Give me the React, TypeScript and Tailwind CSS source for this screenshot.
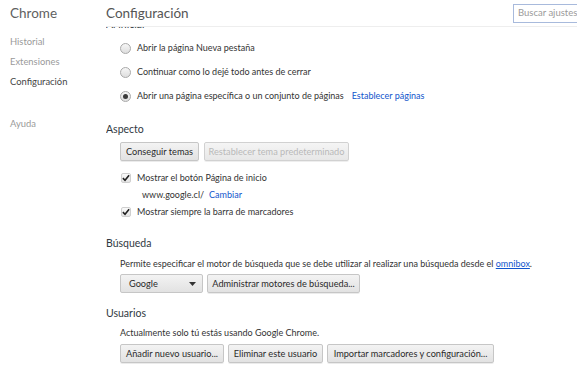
import React from "react";

const font = { fontFamily: 'Lato, "Open Sans", sans-serif' };

function Radio({ checked }: { checked?: boolean }) {
  return (
    <span className="flex h-[11px] w-[11px] shrink-0 items-center justify-center rounded-full border border-[#a9a9a9] bg-gradient-to-b from-[#f6f6f6] to-[#dedede]">
      {checked && <span className="h-[5px] w-[5px] rounded-full bg-[#3a3a3a]" />}
    </span>
  );
}

function Check() {
  return (
    <span className="flex h-[10px] w-[10px] shrink-0 items-center justify-center rounded-[2px] border border-[#cfcfcf] bg-gradient-to-b from-[#fafafa] to-[#e4e4e4]">
      <svg width="9" height="8" viewBox="0 0 9 8">
        <path d="M1 4.2 L3.4 6.6 L8 1" stroke="#222" strokeWidth="1.8" fill="none" />
      </svg>
    </span>
  );
}

function Btn({ children, disabled, w }: { children: React.ReactNode; disabled?: boolean; w: string }) {
  return (
    <div
      className={`flex h-[19px] items-center justify-center whitespace-nowrap rounded-[2px] border border-[#c6c6c6] bg-gradient-to-b from-[#f3f3f3] to-[#e2e2e2] text-[9.2px] shadow-[0_1px_0_rgba(0,0,0,0.08)] ${w} ${
        disabled ? "text-[#a8a8a8] opacity-80" : "text-[#2a2a2a]"
      }`}
    >
      {children}
    </div>
  );
}

export default function App() {
  return (
    <div className="relative flex h-[375px] w-[577px] overflow-hidden bg-white text-[#303942]" style={font}>
      {/* Sidebar */}
      <div className="w-[106px] shrink-0 pl-[10px]">
        <div className="flex h-[26px] items-center text-[13.5px] text-[#5f5f5f]">Chrome</div>
        <div className="mt-[6px] flex h-[20px] items-center text-[9.4px] text-[#9a9a9a]">Historial</div>
        <div className="flex h-[20px] items-center text-[9.4px] text-[#9a9a9a]">Extensiones</div>
        <div className="flex h-[20px] items-center text-[9.4px] text-[#464646]">Configuración</div>
        <div className="mt-[22px] flex h-[20px] items-center text-[9.4px] text-[#9a9a9a]">Ayuda</div>
      </div>

      {/* Main */}
      <div className="flex min-w-0 flex-1 flex-col">
        <div className="flex h-[27px] shrink-0 items-center border-b border-[#eeeeee]">
          <div className="flex-1 text-[13.5px] text-[#555]">Configuración</div>
          <div className="flex h-[19px] w-[80px] shrink-0 translate-x-[16px] items-center whitespace-nowrap border border-[#a8badc] pl-[4px] text-[9.5px] text-[#9a9a9a]">
            Buscar ajustes
          </div>
        </div>

        <div className="flex-1 overflow-hidden">
          <div className="mt-[-10px] flex h-[16px] items-center text-[10.5px] text-[#303942]">Al iniciar</div>

          <div className="mt-[3px] pl-[14px] text-[9px] text-[#333]">
            <div className="flex h-[24px] items-center gap-[6px]">
              <Radio />
              <span>Abrir la página Nueva pestaña</span>
            </div>
            <div className="flex h-[24px] items-center gap-[6px]">
              <Radio />
              <span>Continuar como lo dejé todo antes de cerrar</span>
            </div>
            <div className="flex h-[24px] items-center gap-[6px]">
              <Radio checked />
              <span>Abrir una página específica o un conjunto de páginas</span>
              <span className="ml-[2px] text-[#1155cc]">Establecer páginas</span>
            </div>
          </div>

          <div className="mt-[14px] flex h-[16px] items-center text-[10.5px] text-[#303942]">Aspecto</div>
          <div className="mt-[4px] flex gap-[5px] pl-[14px]">
            <Btn w="w-[79px]">Conseguir temas</Btn>
            <Btn w="w-[145px]" disabled>
              Restablecer tema predeterminado
            </Btn>
          </div>
          <div className="mt-[8px] pl-[15px] text-[9px] text-[#333]">
            <div className="flex h-[17px] items-center gap-[6px]">
              <Check />
              <span>Mostrar el botón Página de inicio</span>
            </div>
            <div className="flex h-[17px] items-center pl-[21px]">
              <span>www.google.cl/</span>
              <span className="ml-[5px] text-[#1155cc]">Cambiar</span>
            </div>
            <div className="flex h-[17px] items-center gap-[6px]">
              <Check />
              <span>Mostrar siempre la barra de marcadores</span>
            </div>
          </div>

          <div className="mt-[16px] flex h-[16px] items-center text-[10.5px] text-[#303942]">Búsqueda</div>
          <div className="mt-[4px] flex h-[16px] items-center whitespace-nowrap pl-[14px] text-[9px] text-[#333]">
            <span>
              Permite especificar el motor de búsqueda que se debe utilizar al realizar una búsqueda desde el{" "}
              <span className="text-[#1155cc] underline">omnibox</span>.
            </span>
          </div>
          <div className="mt-[2px] flex gap-[4px] pl-[14px]">
            <div className="flex h-[19px] w-[83px] items-center justify-between rounded-[2px] border border-[#c6c6c6] bg-gradient-to-b from-[#f3f3f3] to-[#e2e2e2] pl-[8px] pr-[6px] text-[9.2px] text-[#2a2a2a]">
              <span>Google</span>
              <svg width="7" height="4" viewBox="0 0 7 4">
                <path d="M0 0 H7 L3.5 4 Z" fill="#333" />
              </svg>
            </div>
            <Btn w="w-[153px]">Administrar motores de búsqueda...</Btn>
          </div>

          <div className="mt-[13px] flex h-[16px] items-center text-[10.5px] text-[#303942]">Usuarios</div>
          <div className="mt-[3px] flex h-[16px] items-center pl-[14px] text-[9px] text-[#333]">
            Actualmente solo tú estás usando Google Chrome.
          </div>
          <div className="mt-[3px] flex gap-[4px] pl-[14px]">
            <Btn w="w-[104px]">Añadir nuevo usuario...</Btn>
            <Btn w="w-[95px]">Eliminar este usuario</Btn>
            <Btn w="w-[167px]">Importar marcadores y configuración...</Btn>
          </div>
        </div>
      </div>
    </div>
  );
}
